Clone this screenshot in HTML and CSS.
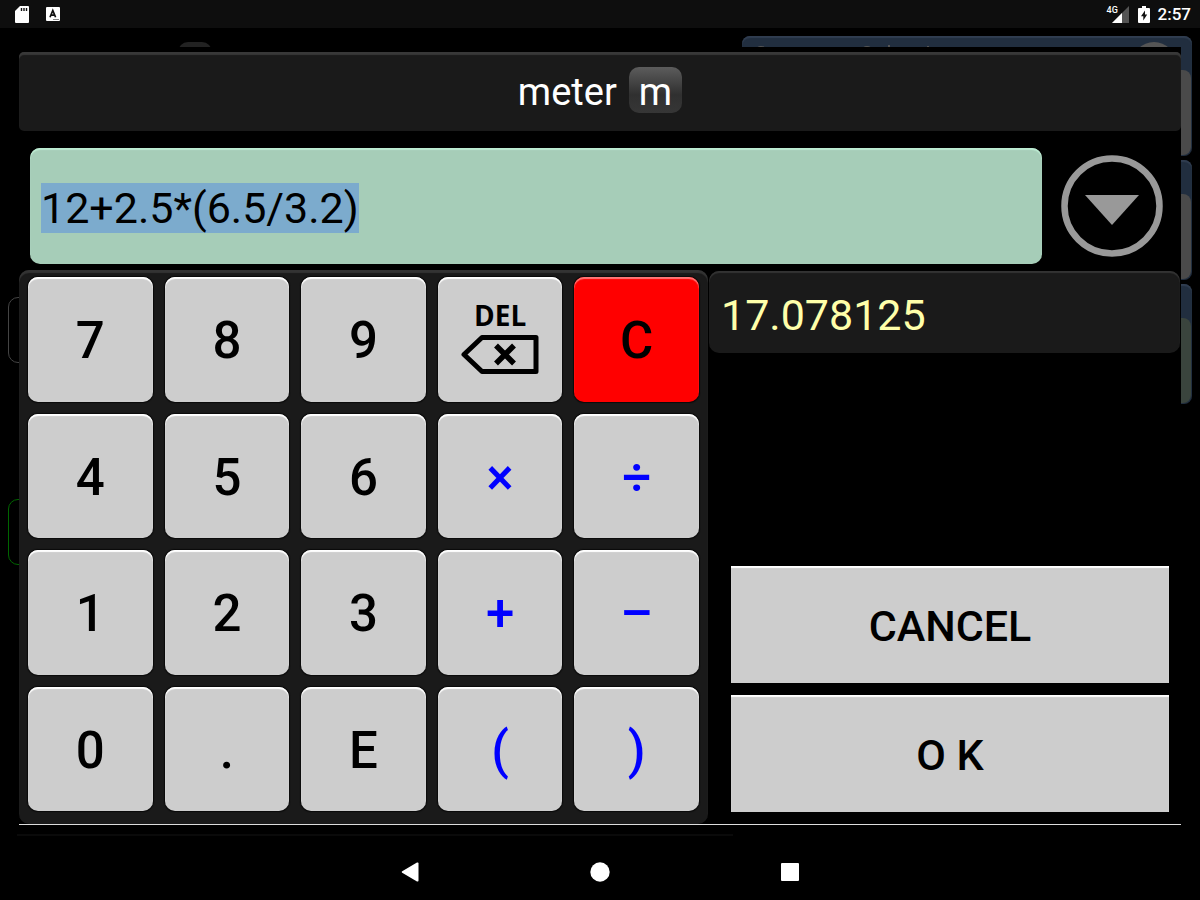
FILE: index.html
```html
<!DOCTYPE html>
<html lang="en">
<head>
<meta charset="utf-8">
<meta name="viewport" content="width=device-width, initial-scale=1">
<title>Unit calculator</title>
<link rel="stylesheet" href="styles.css">
</head>
<body>
<header class="status">
  <div class="status-group">
    <svg width="14" height="17" viewBox="0 0 14 17" aria-hidden="true"><path fill="#fff" d="M5 0h8a1 1 0 0 1 1 1v15a1 1 0 0 1-1 1H1a1 1 0 0 1-1-1V5z"/><path stroke="#111" stroke-width="1.4" d="M6.500 2v3M9 2v3M11.500 2v3"/></svg>
    <svg width="14" height="14" viewBox="0 0 14 14" aria-hidden="true"><rect width="14" height="14" rx="1" fill="#fff"/><path fill="none" stroke="#111" stroke-width="1.700" d="M4 10.300 6.800 3.500 9.600 10.300M5 8.100h3.600"/><path fill="#111" d="M7.500 12h1v1h-1zM9.500 12h1v1h-1zM11.500 12h1v1h-1z"/></svg>
  </div>
  <div class="status-group status-right">
    <div class="signal"><span>4G</span><svg width="17" height="17" viewBox="0 0 17 17" aria-hidden="true"><path fill="#555" d="M17 0v17H0z"/><path fill="#fff" d="M10 7v10H0z"/></svg></div>
    <svg width="12" height="17" viewBox="0 0 12 17" aria-hidden="true"><path fill="#fff" d="M4 0h4v2h3a1 1 0 0 1 1 1v13a1 1 0 0 1-1 1H1a1 1 0 0 1-1-1V3a1 1 0 0 1 1-1h3z"/><path fill="#111" d="M7 4.500 3 10.200H5.300V14.500l3.900-5.900H7z"/></svg>
    <time>2:57</time>
  </div>
</header>

<main class="stage">
  <div class="backdrop" aria-hidden="true">
    <div class="chip"></div>
    <div class="outline outline-grey"></div>
    <div class="outline outline-green"></div>
    <div class="divider"></div>
    <div class="cards">
      <div class="card">
        <svg class="card-marks" viewBox="0 0 450 16" height="16" fill="#555"><ellipse cx="19" cy="13" rx="5" ry="3"/><ellipse cx="125" cy="13" rx="5" ry="3"/><path d="M146 9h2v6h-2zM185 10h2v5h-2z"/><circle cx="412" cy="28" r="22"/></svg>
        <div class="card-body"></div>
      </div>
      <div class="card"><div class="card-body"></div></div>
      <div class="card"><div class="card-body card-body-green"></div></div>
    </div>
  </div>

  <section class="dialog" role="dialog" aria-labelledby="unit-title">
    <h1 class="title" id="unit-title">meter <span class="badge">m</span></h1>
    <div class="entry">
      <input class="expression" id="expression" type="text" aria-label="Expression" value="12+2.5*(6.5/3.2)" autocomplete="off" spellcheck="false">
      <button class="history" type="button" aria-label="Show history">
        <svg width="104" height="104" viewBox="0 0 104 104"><circle cx="52" cy="52" r="47.500" fill="none" stroke="#999" stroke-width="6.500"/><path fill="#999" d="M25 41h54L52 71z"/></svg>
      </button>
    </div>
    <div class="work">
      <div class="keypad">
        <button class="key" type="button">7</button>
        <button class="key" type="button">8</button>
        <button class="key" type="button">9</button>
        <button class="key key-del" type="button"><span>DEL</span>
          <svg width="78" height="41" viewBox="0 0 78 41" aria-hidden="true"><path fill="none" stroke="#000" stroke-width="5" stroke-linejoin="round" d="M3 20.500 21 3.500H75V37.500H21z"/><path stroke="#000" stroke-width="5.500" d="M35 11.500 53 29.500M53 11.500 35 29.500"/></svg>
        </button>
        <button class="key key-clear" type="button">C</button>
        <button class="key" type="button">4</button>
        <button class="key" type="button">5</button>
        <button class="key" type="button">6</button>
        <button class="key key-op" type="button">×</button>
        <button class="key key-op" type="button">÷</button>
        <button class="key" type="button">1</button>
        <button class="key" type="button">2</button>
        <button class="key" type="button">3</button>
        <button class="key key-op" type="button">+</button>
        <button class="key key-op" type="button">–</button>
        <button class="key" type="button">0</button>
        <button class="key" type="button">.</button>
        <button class="key" type="button">E</button>
        <button class="key key-op" type="button">(</button>
        <button class="key key-op" type="button">)</button>
      </div>
      <div class="side">
        <output class="result" for="expression">17.078125</output>
        <div class="actions">
          <button class="action" type="button">CANCEL</button>
          <button class="action" type="button">O K</button>
        </div>
      </div>
    </div>
  </section>
</main>

<nav class="navbar" aria-label="System">
  <button class="nav-button" type="button" aria-label="Back"><svg width="20" height="20" viewBox="0 0 20 20"><path fill="#fff" d="M2.200 9.200 17 .6q1.500-.6 1.500 1v16.800q0 1.600-1.500 1L2.200 10.800q-1.200-.8 0-1.600z"/></svg></button>
  <button class="nav-button" type="button" aria-label="Home"><svg width="20" height="20" viewBox="0 0 20 20"><circle cx="10" cy="10" r="9.700" fill="#fff"/></svg></button>
  <button class="nav-button" type="button" aria-label="Recent apps"><svg width="20" height="20" viewBox="0 0 20 20"><rect x="1" y="1" width="18" height="18" rx="1" fill="#fff"/></svg></button>
</nav>
<script src="app.js"></script>
</body>
</html>
```
FILE: styles.css
```css
* { box-sizing: border-box; }

body {
  margin: 0;
  min-height: 100vh;
  display: flex;
  flex-direction: column;
  background: #000;
  color: #fff;
  font-family: Roboto, "Liberation Sans", sans-serif;
}

button {
  margin: 0;
  padding: 0;
  border: 0;
  background: none;
  color: #000;
  font-family: inherit;
  cursor: pointer;
}

svg { display: block; }

/* Status bar */
.status {
  display: flex;
  justify-content: space-between;
  align-items: center;
  height: 28px;
  padding: 0 9px 0 15px;
  background: #0e0e0e;
}

.status-group { display: flex; align-items: center; gap: 17px; }
.status-right { gap: 8px; font-size: 17px; font-weight: 500; line-height: 30px; }
.signal { position: relative; padding: 0 1px 0 5px; }
.signal span {
  position: absolute;
  left: 0;
  top: 0;
  font-size: 9px;
  line-height: 9px;
}

/* Screen behind the dialog */
.stage { position: relative; flex: 1; padding: 19px 19px 0; }

.backdrop { position: absolute; inset: 0; overflow: hidden; }

.chip {
  position: absolute;
  left: 178px;
  top: 14px;
  width: 34px;
  height: 20px;
  border-radius: 10px;
  background: #222;
}

.outline {
  position: absolute;
  left: 8px;
  width: 60px;
  height: 66px;
  border: 1px solid #444;
  border-radius: 10px;
}
.outline-grey { top: 269px; }
.outline-green { top: 471px; border-color: #060; }

.divider {
  position: absolute;
  left: 17px;
  top: 806px;
  width: 716px;
  height: 2px;
  background: #0a0a0a;
}

.cards {
  position: absolute;
  top: 8px;
  right: 8px;
  width: 450px;
  display: grid;
  gap: 4px;
}

.card {
  position: relative;
  height: 120px;
  padding: 34px 1px 1px;
  border-radius: 8px;
  background: #212e3f;
  box-shadow: inset 0 2px 1px #303d50;
}
.card-marks { position: absolute; top: 0; left: 0; width: 100%; }
.card-body { height: 100%; border-radius: 8px; background: #4a4a4a; }
.card-body-green { background: #3a443d; }

/* Dialog */
.dialog {
  position: relative;
  padding-top: 5px;
  background: #000;
  border-bottom: 1px solid #ddd;
}

.title {
  display: flex;
  justify-content: center;
  align-items: baseline;
  gap: 12px;
  height: 79px;
  margin: 0;
  padding-top: 15px;
  border-radius: 5px;
  background: #1a1a1a;
  box-shadow: inset 0 3px 1px #383838;
  font-size: 38px;
  font-weight: 400;
}

.badge {
  padding: 5px 10px 0;
  border-radius: 10px;
  background: linear-gradient(#5c5c5c, #303030 60%, #363636);
  line-height: 41px;
}

.entry {
  display: flex;
  align-items: center;
  gap: 18px;
  padding: 17px 17px 6px 11px;
}

.expression {
  flex: 1;
  min-width: 0;
  height: 116px;
  padding: 4px 11px 0;
  border: 0;
  border-radius: 10px;
  outline: none;
  background: #a6cdb8;
  box-shadow: inset 0 2px 1px #bcebd2;
  color: #000;
  font-family: inherit;
  font-size: 43px;
}
.expression::selection { background: #7cabcd; color: #000; }

.history { flex: none; }

.work {
  display: grid;
  grid-template-columns: minmax(0, 689fr) minmax(0, 473fr);
  aspect-ratio: 1162 / 554;
}

.keypad {
  display: grid;
  grid-template-columns: repeat(5, minmax(0, 1fr));
  grid-template-rows: repeat(4, minmax(0, 1fr));
  gap: 12px;
  padding: 7px 9px 13px;
  border-radius: 10px;
  background: #1a1a1a;
  box-shadow: inset 0 3px 1px #333;
}

.key {
  display: flex;
  flex-direction: column;
  justify-content: center;
  align-items: center;
  padding-top: 4px;
  border-radius: 10px;
  background: #cdcdcd;
  box-shadow: inset 0 2px 1px #fff, 0 0 1px 1px #0a0a0a;
  font-size: 51px;
  font-weight: 500;
  line-height: 60px;
}
.key-clear { background: #f00; box-shadow: inset 0 2px 1px #f77, 0 0 1px 1px #0a0a0a; }
.key-op { color: #00f; }
.key-del {
  padding: 0 0 8px;
  font-family: "Open Sans", sans-serif;
  font-size: 28px;
  font-weight: 700;
  line-height: 38px;
}

.side { display: flex; flex-direction: column; justify-content: space-between; }

.result {
  height: 82px;
  margin: 1px 1px 0;
  padding: 0 12px;
  border-radius: 10px;
  background: #1a1a1a;
  box-shadow: inset 0 2px 1px #333;
  color: #ffa;
  font-size: 43px;
  line-height: 88px;
}

.actions { display: grid; gap: 12px; padding: 0 12px 12px 23px; }

.action {
  height: 117px;
  padding-top: 3px;
  background: #cdcdcd;
  box-shadow: inset 0 2px 1px #fff;
  font-size: 43px;
  font-weight: 500;
}

/* Navigation bar */
.navbar {
  display: flex;
  justify-content: center;
  gap: 170px;
  height: 56px;
}
```
FILE: app.js
```js
const expression = document.getElementById("expression");
expression.focus();
expression.select();
```
